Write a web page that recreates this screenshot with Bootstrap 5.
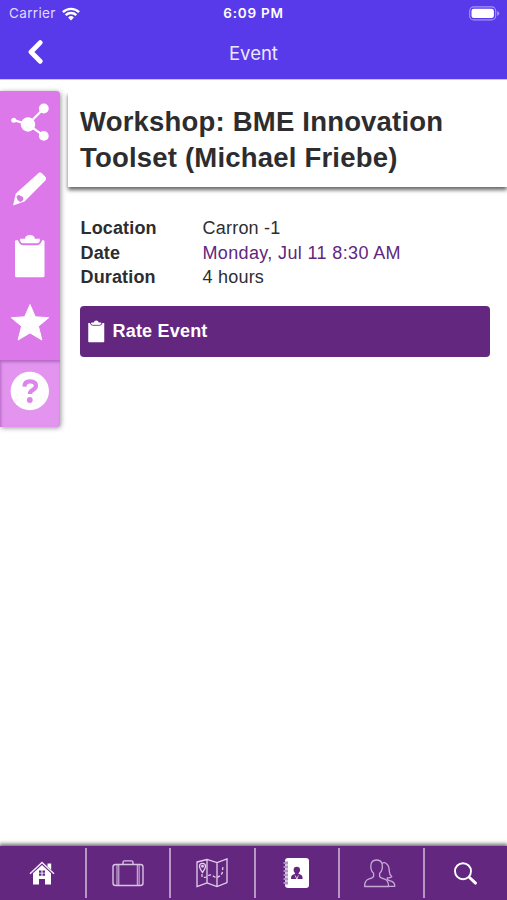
<!DOCTYPE html>
<html lang="en">
<head>
<meta charset="utf-8">
<meta name="viewport" content="width=device-width, initial-scale=1">
<title>Event</title>
<link href="https://cdn.jsdelivr.net/npm/bootstrap@5.3.0/dist/css/bootstrap.min.css" rel="stylesheet">
<style>
body{font-family:"Liberation Sans",Arial,sans-serif;color:#2d2d2f;background:#fff;height:100vh;overflow:hidden}
svg{display:block;flex:none}
.app-head{background:#583aea;height:79px;color:#fff;box-shadow:0 1px 0 #c9c0fa}
.status{height:27px;font-family:Inter,sans-serif;font-size:13.5px;line-height:27px;padding:0 7px 0 9px}
.status>*{flex:1 1 0}
.title-row>*{width:33.333%}
.carrier{color:#e0daff;letter-spacing:.35px}
.clock{font-weight:600;letter-spacing:.75px;margin-left:-2px}
.title-row{height:52px;line-height:52px;font-family:Inter,sans-serif;font-size:18.5px;color:#ece8ff}
.back{padding-left:27px}
.back svg{margin-top:-2px}
.tools{width:60px;height:336px;margin-top:12px;background:#dc78ea;border-radius:0 4px 4px 0;box-shadow:1px 1px 5px rgba(0,0,0,.4);overflow:hidden}
.tool{height:67.2px;color:#fff}
.tool.current{background:#e294ef;box-shadow:inset 1px 2px 3px rgba(110,40,130,.4)}
.heading{margin:13px 0 0 8px;height:95px;padding:12px 12px 0;box-shadow:0 3px 4px rgba(0,0,0,.6);clip-path:inset(0 0 -9px -4px)}
.heading h1{font-size:27.5px;line-height:35.5px;font-weight:700;letter-spacing:.2px}
.facts{margin:29px 0 0 20.5px;font-size:18px;line-height:24.5px}
.facts dt{width:122px;letter-spacing:.15px}
.facts dd{letter-spacing:.22px}
.facts .when{color:#602780;letter-spacing:.36px}
.rate{margin:16.5px 17px 0 20px;height:51px;background:#632780;color:#fff;border:0;border-radius:4px;padding:0 8px;font-size:18px;font-weight:700;letter-spacing:.2px}
.rate:hover{background:#632780;color:#fff}
.tabs{height:54px;background:#632780;color:#f3e6fa;box-shadow:0 -1px 4px 1px rgba(0,0,0,.6)}
.tab-item{flex:1 1 0}
.tab-item+.tab-item::before{content:"";width:2px;height:50px;margin-top:2px;background:#b596c5;flex:none;align-self:flex-start}
.tab-item svg{margin:auto}
</style>
<script src="https://cdn.jsdelivr.net/npm/bootstrap@5.3.0/dist/js/bootstrap.bundle.min.js"></script>
</head>
<body class="d-flex flex-column">
<header class="app-head flex-shrink-0">
  <div class="status d-flex align-items-center">
    <div class="carrier d-flex align-items-center gap-2"><span>Carrier</span>
      <svg width="18" height="14" viewBox="0 0 18 14" fill="none" stroke="#fff" stroke-width="2.4" style="margin-left:-2px"><path d="M.9 5.2a11.6 11.6 0 0 1 16.2 0M3.7 8.2a7.6 7.6 0 0 1 10.6 0"/><path d="M6.1 10.4a4.2 4.2 0 0 1 5.8 0L9 13.4z" fill="#fff" stroke="none"/></svg>
    </div>
    <div class="clock text-center">6:09 PM</div>
    <div class="d-flex justify-content-end"><svg width="31" height="15" viewBox="0 0 31 15"><rect x=".7" y=".9" width="26" height="13" rx="4" fill="none" stroke="#a497f4" stroke-width="1.1"/><rect x="2.5" y="2.7" width="22.4" height="9.4" rx="2.3" fill="#fff"/><path d="M28.2 5.1q2.1.7 2.1 2.3t-2.1 2.3z" fill="#a497f4"/></svg></div>
  </div>
  <div class="title-row d-flex align-items-center">
    <div class="back"><svg width="16" height="24" viewBox="0 0 16 24" fill="none" stroke="#fff" stroke-width="4.8" stroke-linejoin="round"><path d="M13.200 2.600 4 12l9.200 9.200" stroke-linecap="round"/></svg></div>
    <div class="text-center">Event</div>
    <div></div>
  </div>
</header>

<main class="d-flex align-items-start flex-grow-1">
  <nav class="tools flex-shrink-0">
    <div class="tool d-flex align-items-center justify-content-center"><svg width="60" height="66" viewBox="0 91.500 60 66" fill="#fff"><path d="M14 119.600 28 124 44 107.800M28 124l16 11.400" fill="none" stroke="#fff" stroke-width="2.200"/><circle cx="13.800" cy="119.700" r="2.500"/><circle cx="28" cy="124" r="7.200"/><circle cx="43.800" cy="108" r="4.900"/><circle cx="43.800" cy="135.400" r="4.900"/></svg></div>
    <div class="tool d-flex align-items-center justify-content-center"><svg width="60" height="66" viewBox="0 159.300 60 66" fill="#fff"><path d="M37.500 174.200q2.300-2.600 4.600-.4l3 3q2 2.200-.2 4.600L24.500 201.700l-11.400 4 2.700-12z"/><path d="M16.500 196.800q2-2.800 4.200-.6 3.300.4 2.500 4l-2.500 2q-3.500-.8-4.200-5.400z" fill="#d577e5"/></svg></div>
    <div class="tool d-flex align-items-center justify-content-center"><svg width="60" height="66" viewBox="0 226.300 60 66"><path d="M17 240.500h26.200q1.300 0 1.300 1.300v34.200q0 1.600-1.600 1.600H16.600q-1.600 0-1.600-1.600v-34.200q0-1.300 1.300-1.300z" fill="#fff"/><path d="M18.500 238.700q1 5.800 4.500 5.800h14q3.700 0 4.500-5.800" fill="none" stroke="#dc78ea" stroke-width="1.900"/><path d="M20 239h5q.3-3.600 4.900-3.600t4.900 3.600h5.200q-.7 4.300-3 4.300H23q-2.300 0-3-4.300z" fill="#fff"/></svg></div>
    <div class="tool d-flex align-items-center justify-content-center"><svg width="60" height="66" viewBox="0 293 60 66" fill="#fff" stroke="#fff" stroke-linejoin="round"><path d="m30 304.600 5.300 12.200 13.400.9-10.300 8.600 3.500 13.700L30 332.900 18.100 340l3.500-13.700-10.300-8.600 13.400-.9z"/></svg></div>
    <div class="tool current d-flex align-items-center justify-content-center"><svg width="60" height="66" viewBox="0 359 60 66"><circle cx="29.800" cy="390" r="19.200" fill="#fff"/><path d="M24.400 385.600q.1-5.300 5.600-5.300 5.900 0 5.900 4.400 0 2.400-3 4.200-3 1.700-3 4" fill="none" stroke="#dc86ec" stroke-width="4.300"/><circle cx="29.800" cy="399" r="2.900" fill="#dc86ec"/></svg></div>
  </nav>

  <section class="flex-grow-1">
    <div class="heading"><h1 class="mb-0"><span>Workshop: BME Innovation</span><br><span>Toolset (Michael Friebe)</span></h1></div>
    <dl class="facts mb-0">
      <div class="d-flex"><dt>Location</dt><dd class="mb-0">Carron -1</dd></div>
      <div class="d-flex"><dt>Date</dt><dd class="mb-0 when">Monday, Jul 11 8:30 AM</dd></div>
      <div class="d-flex"><dt>Duration</dt><dd class="mb-0">4 hours</dd></div>
    </dl>
    <div class="d-flex"><button type="button" class="btn rate d-flex align-items-center flex-grow-1"><svg class="me-2" width="16.500" height="24" viewBox="0 0 16 24"><path d="M0 3h16v18.500q0 .8-.8.8H.8q-.8 0-.8-.8z" fill="#fff"/><path d="M2.200 3q.4 2.200 2.300 2.200h7q1.900 0 2.300-2.200" fill="none" stroke="#632780" stroke-width="1"/><path d="M3 2.500h2.500Q5.800.4 8 .4t2.500 2.100H13q-.4 2-1.500 2h-7Q3.400 4.500 3 2.500z" fill="#fff"/></svg><span>Rate Event</span></button></div>
  </section>
</main>

<footer class="tabs d-flex flex-shrink-0">
  <div class="tab-item d-flex"><svg width="26" height="32" viewBox="30 857.500 26 32"><path d="m31 874.200 12-11.200 12 11.200" fill="none" stroke="#f5eafa" stroke-width="1.500"/><path d="M48.500 864h3.700v6.300l-3.700-3.400zM34 873.700l9-8.300 9 8.300V885h-6v-5.500h-6v5.500h-6z" fill="#fff"/><path d="M40 871h2.500v2.200H40zm3.500 0H46v2.200h-2.500zm-3.500 3h2.500v2.200H40zm3.500 0H46v2.200h-2.500z" fill="#632780"/></svg></div>
  <div class="tab-item d-flex"><svg width="32" height="32" viewBox="111 857 32 32" fill="none" stroke="#d9c3e3" stroke-width="1.400"><rect x="112" y="864.500" width="30" height="21" rx="2.500"/><path d="M116 864.500v21M117.800 864.500v21M136.300 864.500v21M138.100 864.500v21" stroke-width="1"/><path d="M122 864v-1.500q0-1.600 1.600-1.600h6.800q1.600 0 1.600 1.600v1.500"/></svg></div>
  <div class="tab-item d-flex"><svg width="32" height="32" viewBox="196 857 32 32" fill="none" stroke="#e3d0ec" stroke-width="1.300"><path d="m197 862 10-2.500 10 3 10-3.500v23.500l-10 4-10-3.500-10 3.500zM207 859.500V883m10-20.500V886.500"/><path d="M202.500 872.500q-3-4.200-3-6.200a3 3 0 0 1 6 0q0 2-3 6.200z"/><circle cx="202.500" cy="866.300" r=".8"/><path d="M202 874v3q3 1 5-.5 3-2.500 5.500-1 4 3.500 7 .5 3-2 3-4.500t.5-4.500" stroke-dasharray="3 1.800"/></svg></div>
  <div class="tab-item d-flex"><svg width="28" height="32" viewBox="282.500 857 28 32"><rect x="284.500" y="858" width="24" height="30" rx="3" fill="#fff"/><path d="M283 863h4.500m-4.500 4h4.500m-4.500 4h4.500m-4.500 4h4.500m-4.500 4h4.500m-4.500 4h4.500" stroke="#632780" stroke-width="2.600"/><path d="M283 863h4.500m-4.500 4h4.500m-4.500 4h4.500m-4.500 4h4.500m-4.500 4h4.500m-4.500 4h4.500" stroke="#fff" stroke-width="1.200"/><circle cx="296.300" cy="870" r="3.200" fill="#632780"/><path d="M294.700 872h3.200l.3 2q3.800 1 3.800 3.200v1.800h-11.400v-1.800q0-2.200 3.800-3.200z" fill="#632780"/><path d="m294.700 875.500 1.600 3.500 1.600-3.500" fill="none" stroke="#fff" stroke-width=".8"/></svg></div>
  <div class="tab-item d-flex"><svg width="34" height="32" viewBox="364 857 34 32" fill="none" stroke="#c7a9d7" stroke-width="1.300" stroke-linejoin="round"><path d="M373.600 873.200q-2-1.300-2.500-4-1.500-9.200 5.500-9.200t5.500 9.200q-.5 2.700-2.500 4v3q.6 1.800 4.500 2.700 4.500 1.300 4.500 7.600h-24q0-6.300 4.500-7.600 3.900-.9 4.500-2.700z"/><path d="M382 863.500q2.500-2 5 .7 2.200 2 2.300 7.300.2 3.300 2.500 5.200-2 1.500-4.500 1.200v1.400q.4 1 3 1.500 4.500 1 4.500 5.500h-6"/></svg></div>
  <div class="tab-item d-flex"><svg width="26" height="32" viewBox="452.500 857 26 32" fill="none" stroke="#fff" stroke-linecap="round"><circle cx="462.500" cy="871.200" r="8" stroke-width="1.900"/><path d="m469 877.500 6 5.600" stroke-width="3"/></svg></div>
</footer>
</body>
</html>
